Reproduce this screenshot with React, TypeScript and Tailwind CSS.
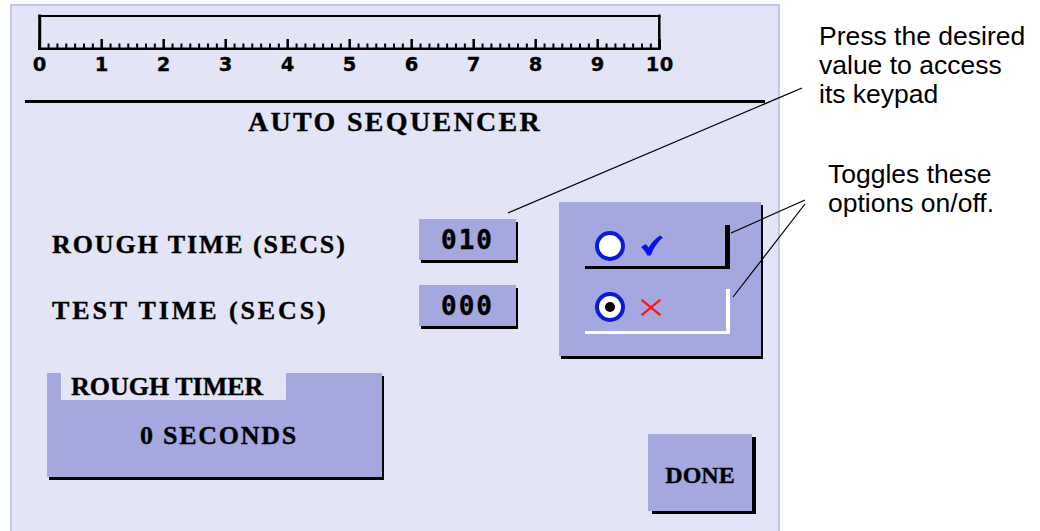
import React from "react";

const X0 = 39.7;
const U = 62;

function Ruler() {
  const minors: number[] = [];
  for (let i = 0; i < 10; i++) for (let j = 1; j < 7; j++) minors.push(X0 + U * i + (U * j) / 7);
  const majors = Array.from({ length: 11 }, (_, i) => i);
  return (
    <svg width="680" height="72" viewBox="12 6 680 72" className="block shrink-0">
      <g stroke="#000" fill="none">
        <line x1={X0} y1={14.5} x2={X0} y2={50} strokeWidth={3} />
        <line x1={38.2} y1={16} x2={660.5} y2={16} strokeWidth={2} />
        <line x1={659.3} y1={14.5} x2={659.3} y2={50} strokeWidth={2.5} />
        <line x1={38.2} y1={48.7} x2={660.5} y2={48.7} strokeWidth={2.5} />
        {majors.map((i) => (
          <line key={"M" + i} x1={X0 + U * i} y1={39} x2={X0 + U * i} y2={49} strokeWidth={2.5} />
        ))}
        {minors.map((x, k) => (
          <line key={"m" + k} x1={x} y1={43.5} x2={x} y2={49} strokeWidth={2} />
        ))}
      </g>
      <g
        fontFamily="'DejaVu Sans', sans-serif"
        fontWeight="bold"
        fontSize="19.5"
        textAnchor="middle"
        fill="#000"
        stroke="#000"
        strokeWidth="0.3"
      >
        {majors.map((i) => (
          <text key={"t" + i} x={X0 + U * i} y={71} letterSpacing="0.5">
            {i}
          </text>
        ))}
      </g>
    </svg>
  );
}

function Radio({ on }: { on: boolean }) {
  return (
    <div className="w-[30px] h-[30px] rounded-full border-4 border-[#0a1ad6] bg-white flex items-center justify-center shrink-0">
      {on && <div className="w-[10px] h-[10px] rounded-full bg-black" />}
    </div>
  );
}

function Check() {
  return (
    <svg width="22" height="21" viewBox="0 0 22 21" className="block ml-[16px]">
      <path
        d="M0.2 12.6 C1.6 10.6 3.4 9.4 5.2 9.2 L7.6 12.6 C10.6 7.6 14.4 3.4 19 0.4 L21.9 2.4 C16.8 6.8 12.6 12.8 9.8 20.4 L6.4 20.6 C4.8 17.4 2.8 14.4 0.2 12.6 Z"
        fill="#0a14e8"
      />
    </svg>
  );
}

function Cross() {
  return (
    <svg width="20" height="17" viewBox="0 0 20 17" className="block ml-[16px]">
      <g stroke="#ff1010" strokeWidth="2.2" strokeLinecap="square">
        <line x1="1.5" y1="1.5" x2="18.5" y2="15.5" />
        <line x1="18.5" y1="1.5" x2="1.5" y2="15.5" />
      </g>
    </svg>
  );
}

const serif =
  "font-['Liberation_Serif','Times_New_Roman',serif] font-bold text-black whitespace-nowrap [-webkit-text-stroke:0.35px_#000]";
const digits = "font-['DejaVu_Sans_Mono',monospace] font-bold text-black [-webkit-text-stroke:0.4px_#000]";

export default function App() {
  return (
    <div className="relative w-[1040px] h-[531px] overflow-hidden bg-white flex items-start">
      <div className="ml-[10px] mt-[4px] w-[770px] h-[540px] shrink-0 bg-[#e3e4f5] border-t-2 border-l-2 border-r-2 border-[#c2c5ec] flex flex-col">
        <Ruler />
        <div className="ml-[13px] mt-[22px] w-[740px] h-[3px] bg-black" />
        <div className={`${serif} mt-[4px] h-[30px] text-[28px] leading-[30px] tracking-[2.3px] text-center`}>
          AUTO SEQUENCER
        </div>

        <div className="mt-[65px] flex items-start">
          <div className="ml-[40px] pt-[17px] flex flex-col gap-[25px]">
            <div className="flex items-center h-[41px]">
              <div className={`${serif} w-[367px] pt-[10px] text-[26px] leading-[30px] tracking-[1.9px]`}>ROUGH TIME (SECS)</div>
              <div
                className={`${digits} w-[97px] h-[41px] bg-[#a5a8de] shadow-[2px_3px_0_#000] flex items-center justify-center text-[26px] leading-[26px] tracking-[2px]`}
              >
                010
              </div>
            </div>
            <div className="flex items-center h-[41px]">
              <div className={`${serif} w-[367px] pt-[10px] text-[26px] leading-[30px] tracking-[2.9px]`}>TEST TIME (SECS)</div>
              <div
                className={`${digits} w-[97px] h-[41px] bg-[#a5a8de] shadow-[2px_3px_0_#000] flex items-center justify-center text-[26px] leading-[26px] tracking-[2px]`}
              >
                000
              </div>
            </div>
          </div>

          <div className="ml-[43px] w-[202px] h-[154px] bg-[#a5a8de] shadow-[2px_3px_0_#000] flex flex-col pt-[23px] pl-[26px]">
            <div className="w-[145px] h-[44px] border-r-[5px] border-b-[3px] border-black flex items-center pl-[10px]">
              <Radio on={false} />
              <Check />
            </div>
            <div className="mt-[20px] w-[145px] h-[45px] border-r-4 border-b-[3px] border-white flex items-center pl-[10px] pb-[6px]">
              <Radio on={true} />
              <Cross />
            </div>
          </div>
        </div>

        <div className="mt-[17px] flex items-start">
          <div className="ml-[35px] w-[335px] h-[104px] bg-[#a5a8de] shadow-[2px_3px_0_#000] flex flex-col">
            <div className={`${serif} ml-[14px] w-[225px] h-[27px] bg-[#e3e4f5] flex items-center pl-[10px] text-[26px] leading-[30px]`}>
              ROUGH TIMER
            </div>
            <div className={`${serif} flex-1 flex items-center justify-center pl-[9px] pb-[5px] text-[26px] leading-[30px] tracking-[1.75px]`}>
              0 SECONDS
            </div>
          </div>
          <div
            className={`${serif} ml-[266px] mt-[61px] w-[104px] h-[77px] bg-[#a5a8de] shadow-[4px_3px_0_#000] flex items-center justify-center pt-[5px] text-[24px] leading-[30px]`}
          >
            DONE
          </div>
        </div>
      </div>

      <div className="ml-[39px] flex flex-col font-['Liberation_Sans',Arial,sans-serif] text-[26.5px] leading-[29px] text-black whitespace-nowrap">
        <div className="mt-[22px]">
          Press the desired
          <br />
          value to access
          <br />
          its keypad
        </div>
        <div className="mt-[51px] ml-[9px]">
          Toggles these
          <br />
          options on/off.
        </div>
      </div>

      <svg className="absolute inset-0 pointer-events-none" width="1040" height="531" viewBox="0 0 1040 531">
        <g stroke="#000" strokeWidth="1.2" fill="none">
          <line x1="508" y1="213" x2="802" y2="88" />
          <line x1="731" y1="233" x2="805" y2="200" />
          <line x1="733" y1="297" x2="805" y2="204" />
        </g>
      </svg>
    </div>
  );
}
